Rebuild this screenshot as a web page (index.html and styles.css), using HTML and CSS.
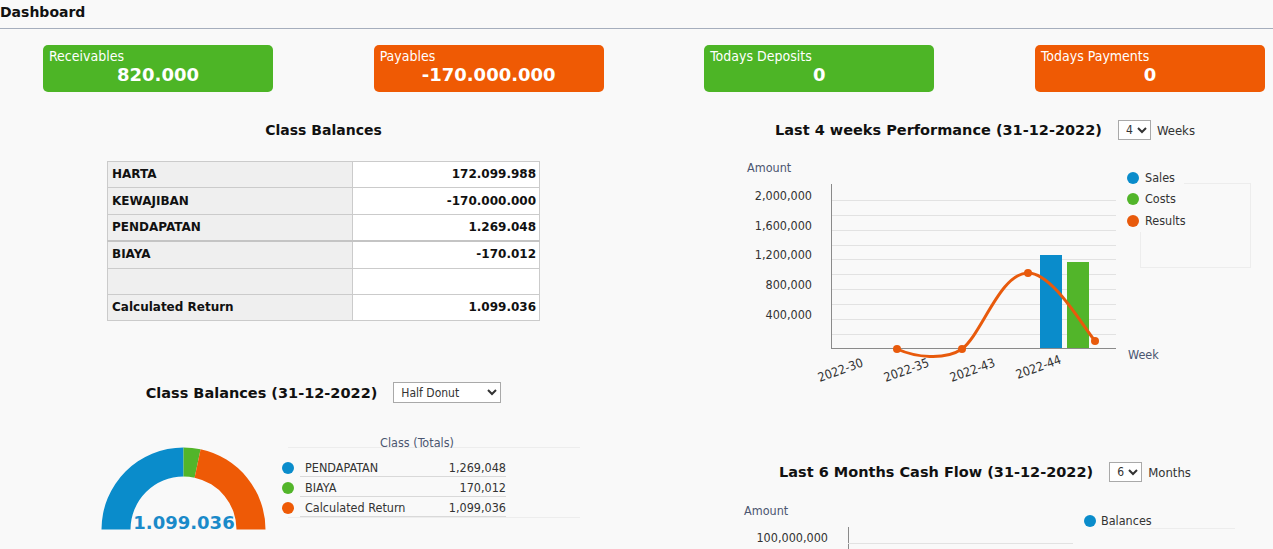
FILE: index.html
```html
<!DOCTYPE html>
<html>
<head>
<meta charset="utf-8">
<title>Dashboard</title>
<link rel="stylesheet" href="styles.css">
</head>
<body>
<div class="page">
  <header class="topbar">Dashboard</header>

  <div class="cards">
    <div class="card green"><div class="card-label">Receivables</div><div class="card-value">820.000</div></div>
    <div class="card orange"><div class="card-label">Payables</div><div class="card-value">-170.000.000</div></div>
    <div class="card green"><div class="card-label">Todays Deposits</div><div class="card-value">0</div></div>
    <div class="card orange"><div class="card-label">Todays Payments</div><div class="card-value">0</div></div>
  </div>

  <div class="main">
    <section class="col left">
      <div class="title-row"><h2 class="title">Class Balances</h2></div>
      <table class="balances">
        <tr><th>HARTA</th><td>172.099.988</td></tr>
        <tr><th>KEWAJIBAN</th><td>-170.000.000</td></tr>
        <tr><th>PENDAPATAN</th><td>1.269.048</td></tr>
        <tr class="sep"><th>BIAYA</th><td>-170.012</td></tr>
        <tr><th>&nbsp;</th><td>&nbsp;</td></tr>
        <tr><th>Calculated Return</th><td>1.099.036</td></tr>
      </table>

      <div class="title-row row2">
        <h2 class="title wide">Class Balances (31-12-2022)</h2>
        <select class="sel sel-wide"><option>Half Donut</option></select>
      </div>

      <svg class="donut-chart" width="647" height="146" viewBox="0 0 647 146">
        <g transform="translate(0,-403)">
          <path d="M101.5 529.5 A82 82 0 0 1 183.5 447.5 L183.5 476.5 A53 53 0 0 0 130.5 529.5 Z" fill="#0a8ccb"/>
          <path d="M183.5 447.5 A82 82 0 0 1 200.6 449.3 L194.6 477.7 A53 53 0 0 0 183.5 476.5 Z" fill="#52b52a"/>
          <path d="M200.6 449.3 A82 82 0 0 1 265.5 529.5 L236.5 529.5 A53 53 0 0 0 194.6 477.7 Z" fill="#ee5a06"/>
          <text x="184" y="529" text-anchor="middle" class="donut-total">1.099.036</text>

          <line x1="288" y1="447.5" x2="580" y2="447.5" class="faint"/>
          <line x1="288" y1="517.5" x2="580" y2="517.5" class="faint"/>
          <text x="417" y="447" text-anchor="middle" class="axis-title">Class (Totals)</text>

          <circle cx="288" cy="468" r="6" fill="#0a8ccb"/>
          <text x="305" y="472" class="lbl">PENDAPATAN</text>
          <text x="506" y="472" text-anchor="end" class="lbl">1,269,048</text>
          <line x1="300" y1="476.5" x2="506" y2="476.5" class="rowline"/>

          <circle cx="288" cy="488" r="6" fill="#52b52a"/>
          <text x="305" y="492" class="lbl">BIAYA</text>
          <text x="506" y="492" text-anchor="end" class="lbl">170,012</text>
          <line x1="300" y1="496.5" x2="506" y2="496.5" class="rowline"/>

          <circle cx="288" cy="508" r="6" fill="#ee5a06"/>
          <text x="305" y="512" class="lbl">Calculated Return</text>
          <text x="506" y="512" text-anchor="end" class="lbl">1,099,036</text>
          <line x1="300" y1="516.5" x2="506" y2="516.5" class="rowline"/>
        </g>
      </svg>
    </section>

    <section class="col right">
      <div class="title-row">
        <h2 class="title wide">Last 4 weeks Performance (31-12-2022)</h2>
        <select class="sel"><option>4</option></select>
        <span class="unit">Weeks</span>
      </div>

      <svg class="perf-chart" width="676" height="250" viewBox="0 0 676 250">
        <g transform="translate(-647,-140)">
          <text x="747" y="172" class="axis-title">Amount</text>
          <g class="grid">
            <line x1="831" y1="200.5" x2="1116" y2="200.5"/>
            <line x1="831" y1="215.5" x2="1116" y2="215.5"/>
            <line x1="831" y1="230.5" x2="1116" y2="230.5"/>
            <line x1="831" y1="245.5" x2="1116" y2="245.5"/>
            <line x1="831" y1="259.5" x2="1116" y2="259.5"/>
            <line x1="831" y1="274.5" x2="1116" y2="274.5"/>
            <line x1="831" y1="289.5" x2="1116" y2="289.5"/>
            <line x1="831" y1="304.5" x2="1116" y2="304.5"/>
            <line x1="831" y1="319.5" x2="1116" y2="319.5"/>
            <line x1="831" y1="334.5" x2="1116" y2="334.5"/>
          </g>
          <line x1="831.5" y1="184" x2="831.5" y2="349" class="axis"/>
          <line x1="831" y1="348.5" x2="1116" y2="348.5" class="axis"/>

          <text x="812" y="200" text-anchor="end" class="lbl">2,000,000</text>
          <text x="812" y="230" text-anchor="end" class="lbl">1,600,000</text>
          <text x="812" y="259" text-anchor="end" class="lbl">1,200,000</text>
          <text x="812" y="289" text-anchor="end" class="lbl">800,000</text>
          <text x="812" y="319" text-anchor="end" class="lbl">400,000</text>

          <rect x="1040" y="255" width="22" height="93" fill="#0a8ccb"/>
          <rect x="1067" y="262" width="22" height="86" fill="#52b52a"/>

          <path d="M897 349 C915 357 944 361 962 349 C982 334 1000 273 1028 273 C1052 273 1080 322 1095 341" fill="none" stroke="#e85a0c" stroke-width="3"/>
          <circle cx="897" cy="349" r="4" fill="#e85a0c"/>
          <circle cx="962" cy="349" r="4" fill="#e85a0c"/>
          <circle cx="1028" cy="273" r="4" fill="#e85a0c"/>
          <circle cx="1095" cy="341" r="4" fill="#e85a0c"/>

          <text x="864" y="366" text-anchor="end" transform="rotate(-20 864 366)" class="lbl">2022-30</text>
          <text x="930" y="366" text-anchor="end" transform="rotate(-20 930 366)" class="lbl">2022-35</text>
          <text x="996" y="366" text-anchor="end" transform="rotate(-20 996 366)" class="lbl">2022-43</text>
          <text x="1062" y="363" text-anchor="end" transform="rotate(-20 1062 363)" class="lbl">2022-44</text>
          <text x="1128" y="359" class="axis-title">Week</text>

          <rect x="1140.5" y="183.5" width="110" height="84" class="faint" fill="none"/>
          <rect x="1124" y="168" width="60" height="64" fill="#f9f9f9"/>
          <circle cx="1133" cy="178" r="6" fill="#0a8ccb"/>
          <text x="1145" y="182" class="lbl">Sales</text>
          <circle cx="1133" cy="199" r="6" fill="#52b52a"/>
          <text x="1145" y="203" class="lbl">Costs</text>
          <circle cx="1133" cy="221" r="6" fill="#e85a0c"/>
          <text x="1145" y="225" class="lbl">Results</text>
        </g>
      </svg>

      <div class="title-row row3">
        <h2 class="title wide">Last 6 Months Cash Flow (31-12-2022)</h2>
        <select class="sel"><option>6</option></select>
        <span class="unit">Months</span>
      </div>

      <svg class="cash-chart" width="676" height="80" viewBox="0 0 676 80">
        <g transform="translate(-647,-482)">
          <text x="744" y="515" class="axis-title">Amount</text>
          <line x1="848.5" y1="527" x2="848.5" y2="560" class="axis"/>
          <line x1="848" y1="543.5" x2="1073" y2="543.5" class="gridl"/>
          <text x="828" y="542" text-anchor="end" class="lbl">100,000,000</text>
          <line x1="1108" y1="528.5" x2="1235" y2="528.5" class="faint"/>
          <circle cx="1090" cy="521" r="6" fill="#0a8ccb"/>
          <text x="1101" y="525" class="lbl">Balances</text>
        </g>
      </svg>
    </section>
  </div>
</div>
</body>
</html>
```

FILE: styles.css
```css
html, body {
  margin: 0;
  padding: 0;
  background: #f9f9f9;
  overflow: hidden;
}

.page {
  width: 1323px;
  font-family: "DejaVu Sans", Verdana, sans-serif;
  color: #111;
}

.topbar {
  height: 24px;
  line-height: 24px;
  padding-bottom: 4px;
  border-bottom: 1px solid #a6aebd;
  font-weight: bold;
  font-size: 14px;
  color: #111;
}

.cards {
  display: flex;
  gap: 100.67px;
  padding-left: 43px;
  margin-top: 16px;
}

.card {
  width: 230px;
  height: 47px;
  box-sizing: border-box;
  border-radius: 5px;
  padding: 3px 6px 0;
  color: #fff;
}
.card.green { background: #4db526; }
.card.orange { background: #ef5a04; }

.card-label {
  font-family: "DejaVu Sans Condensed", "DejaVu Sans", sans-serif;
  font-stretch: condensed;
  font-size: 14px;
  line-height: 16px;
}
.card-value {
  font-weight: bold;
  font-size: 18px;
  line-height: 21px;
  text-align: center;
}

.main {
  display: grid;
  grid-template-columns: 647px 676px;
  padding-top: 28px;
}

.col {
  display: flex;
  flex-direction: column;
}

.title-row {
  display: flex;
  align-items: center;
  justify-content: center;
  height: 20px;
}
.title {
  margin: 0;
  font-size: 14px;
  font-weight: bold;
  line-height: 20px;
  color: #111;
}
.title.wide {
  font-size: 14.5px;
}
.title-row .sel { margin-left: 16px; }
.unit {
  margin-left: 6px;
  font-family: "DejaVu Sans Condensed", "DejaVu Sans", sans-serif;
  font-stretch: condensed;
  font-size: 13px;
  color: #333;
}

.sel {
  font-family: "DejaVu Sans Condensed", "DejaVu Sans", sans-serif;
  font-stretch: condensed;
  font-size: 12px;
  height: 20px;
  width: 33px;
  padding: 0 0 0 3px;
  border: 1px solid #a9a9a9;
  border-radius: 0;
  background: #fff;
  color: #333;
}
.sel-wide {
  width: 108px;
  height: 21px;
}

.balances {
  border-collapse: collapse;
  width: 433px;
  margin: 21px auto 0;
  font-size: 12px;
}
.balances th, .balances td {
  border: 1px solid #cbcbcb;
  padding: 0 3px 0 4px;
  height: 25.4px;
  line-height: 25px;
  font-weight: bold;
}
.balances th {
  width: 237px;
  text-align: left;
  background: #efefef;
}
.balances td {
  text-align: right;
  background: #fff;
}
.balances tr.sep th, .balances tr.sep td {
  border-top: 2px solid #c4c4c4;
}

.row2 {
  margin-top: 61px;
  height: 21px;
}

.row3 {
  margin-top: 72px;
}

svg { display: block; }

svg text {
  font-family: "DejaVu Sans Condensed", "DejaVu Sans", sans-serif;
  font-stretch: condensed;
}
.lbl { font-size: 12.5px; fill: #333; }
.axis-title { font-size: 12.5px; fill: #4b5670; }
.donut-total { font-family: "DejaVu Sans", sans-serif; font-stretch: normal; font-size: 18px; font-weight: bold; fill: #1a8ac9; }

.grid line, .gridl { stroke: #e2e2e2; stroke-width: 1; }
.axis { stroke: #8a8a8a; stroke-width: 1; }
.faint { stroke: #ededed; stroke-width: 1; fill: none; }
.rowline { stroke: #d9d9d9; stroke-width: 1; }
```
